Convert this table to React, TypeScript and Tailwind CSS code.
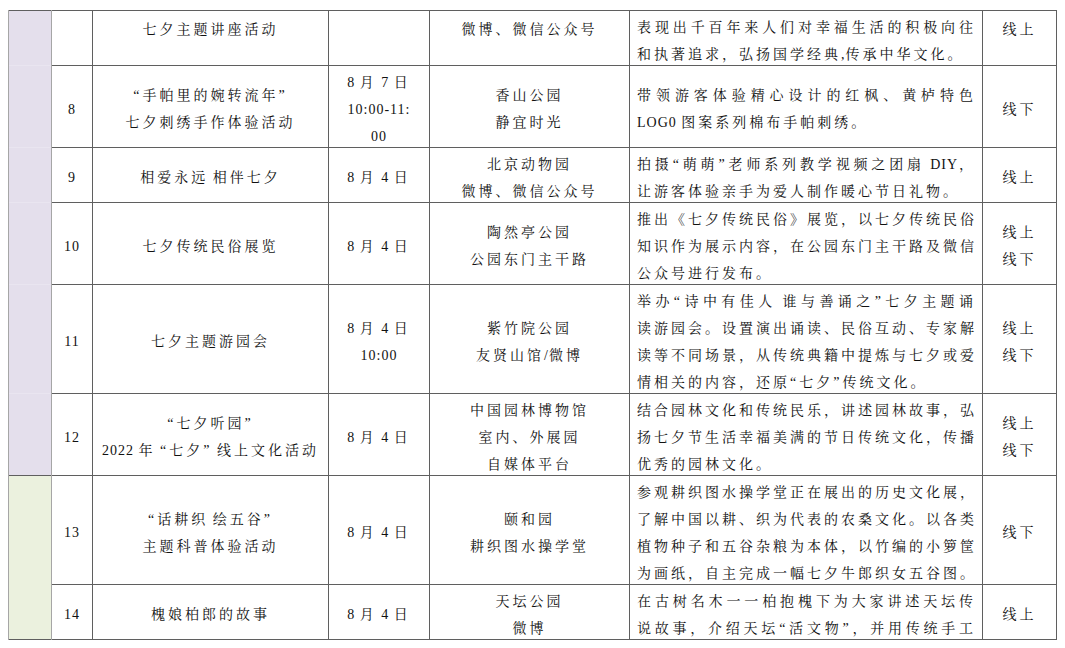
import React from 'react';

type Row = {
  no: string;
  title: string[];
  date: string[];
  place: string[];
  desc: string[];
  mode: string[];
  cont?: boolean;
};

const rows: Row[] = [
  {
    no: '',
    title: ['七夕主题讲座活动', ''],
    date: [],
    place: ['微博、微信公众号', ''],
    desc: ['表现出千百年来人们对幸福生活的积极向往', '和执著追求，弘扬国学经典,传承中华文化。'],
    mode: ['线上', ''],
  },
  {
    no: '8',
    title: ['“手帕里的婉转流年”', '七夕刺绣手作体验活动'],
    date: ['8 月 7 日', '10:00-11:', '00'],
    place: ['香山公园', '静宜时光'],
    desc: ['带领游客体验精心设计的红枫、黄栌特色', 'LOG0 图案系列棉布手帕刺绣。'],
    mode: ['线下'],
  },
  {
    no: '9',
    title: ['相爱永远 相伴七夕'],
    date: ['8 月 4 日'],
    place: ['北京动物园', '微博、微信公众号'],
    desc: ['拍摄“萌萌”老师系列教学视频之团扇 DIY，', '让游客体验亲手为爱人制作暖心节日礼物。'],
    mode: ['线上'],
  },
  {
    no: '10',
    title: ['七夕传统民俗展览'],
    date: ['8 月 4 日'],
    place: ['陶然亭公园', '公园东门主干路'],
    desc: ['推出《七夕传统民俗》展览，以七夕传统民俗', '知识作为展示内容，在公园东门主干路及微信', '公众号进行发布。'],
    mode: ['线上', '线下'],
  },
  {
    no: '11',
    title: ['七夕主题游园会'],
    date: ['8 月 4 日', '10:00'],
    place: ['紫竹院公园', '友贤山馆/微博'],
    desc: [
      '举办“诗中有佳人 谁与善诵之”七夕主题诵',
      '读游园会。设置演出诵读、民俗互动、专家解',
      '读等不同场景，从传统典籍中提炼与七夕或爱',
      '情相关的内容，还原“七夕”传统文化。',
    ],
    mode: ['线上', '线下'],
  },
  {
    no: '12',
    title: ['“七夕听园”', '2022 年 “七夕” 线上文化活动'],
    date: ['8 月 4 日'],
    place: ['中国园林博物馆', '室内、外展园', '自媒体平台'],
    desc: ['结合园林文化和传统民乐，讲述园林故事，弘', '扬七夕节生活幸福美满的节日传统文化，传播', '优秀的园林文化。'],
    mode: ['线上', '线下'],
  },
  {
    no: '13',
    title: ['“话耕织 绘五谷”', '主题科普体验活动'],
    date: ['8 月 4 日'],
    place: ['颐和园', '耕织图水操学堂'],
    desc: [
      '参观耕织图水操学堂正在展出的历史文化展，',
      '了解中国以耕、织为代表的农桑文化。以各类',
      '植物种子和五谷杂粮为本体，以竹编的小箩筐',
      '为画纸，自主完成一幅七夕牛郎织女五谷图。',
    ],
    mode: ['线下'],
  },
  {
    no: '14',
    title: ['槐娘柏郎的故事'],
    date: ['8 月 4 日'],
    place: ['天坛公园', '微博'],
    desc: ['在古树名木一一柏抱槐下为大家讲述天坛传', '说故事，介绍天坛“活文物”，并用传统手工'],
    mode: ['线上'],
    cont: true,
  },
];

// latin runs get tighter tracking than the CJK text
const Runs: React.FC<{ text: string }> = ({ text }) => {
  const parts = text.split(/([\x20-\x7E]+)/);
  return (
    <>
      {parts.map((p, i) =>
        p === '' ? null : /^[\x20-\x7E]+$/.test(p) ? (
          <span key={i} className="tracking-[1px]">
            {p}
          </span>
        ) : (
          <span key={i}>{p}</span>
        )
      )}
    </>
  );
};

const Line: React.FC<{ text: string; justify?: boolean }> = ({ text, justify }) => (
  <div
    className={
      justify
        ? 'h-[27px] leading-[27px] whitespace-pre [text-align-last:justify]'
        : 'h-[27px] leading-[27px] whitespace-pre'
    }
  >
    <Runs text={text} />
  </div>
);

const Center: React.FC<{ lines: string[] }> = ({ lines }) => (
  <div className="bg-white flex flex-col justify-center items-center text-center pt-[5px]">
    {lines.map((l, i) => (
      <Line key={i} text={l} />
    ))}
  </div>
);

const App: React.FC = () => {
  return (
    <div
      className="w-[1065px] h-[648px] bg-white pt-[10px] pl-[8px] text-[14px] tracking-[3px] text-[#111] overflow-hidden"
      style={{ fontFamily: '"Liberation Serif", "Noto Serif CJK SC", "Noto Sans CJK SC", serif' }}
    >
      <div className="flex w-[1049px]">
        {/* category column */}
        <div className="w-[44px] flex flex-col gap-px py-px bg-[#5f5f5f] border-x border-[#a6a6a6]">
          <div className="h-[464px] flex flex-col gap-px bg-[#e9e5f0]">
            <div className="h-[54px] bg-[#e4dfec]" />
            <div className="h-[81px] bg-[#e4dfec]" />
            <div className="h-[54px] bg-[#e4dfec]" />
            <div className="h-[81px] bg-[#e4dfec]" />
            <div className="h-[108px] bg-[#e4dfec]" />
            <div className="h-[81px] bg-[#e4dfec]" />
          </div>
          <div className="h-[163px] bg-[#ebf1de]" />
        </div>

        <div className="grid grid-cols-[40px_235px_100px_199px_352px_73px] grid-rows-[54px_81px_54px_81px_108px_81px_108px_54px] gap-px py-px pr-px bg-[#5f5f5f]">
          {rows.map((r, idx) => (
            <React.Fragment key={idx}>
              <Center lines={r.no ? [r.no] : []} />
              <Center lines={r.title} />
              <Center lines={r.date} />
              <Center lines={r.place} />
              <div className="bg-white flex flex-col justify-center pt-[5px] pl-[7px] pr-[6px]">
                {r.desc.map((l, i) => (
                  <Line key={i} text={l} justify={r.cont || i < r.desc.length - 1} />
                ))}
              </div>
              <Center lines={r.mode} />
            </React.Fragment>
          ))}
        </div>
      </div>
    </div>
  );
};

export default App;
